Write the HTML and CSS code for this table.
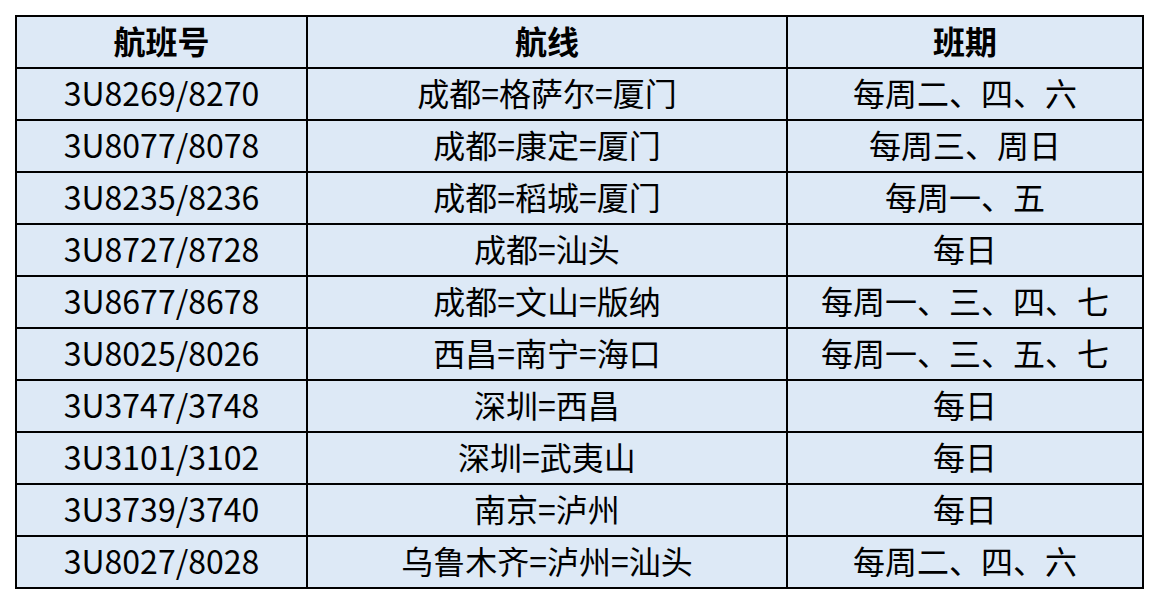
FILE: index.html
```html
<!DOCTYPE html>
<html lang="zh-CN">
<head>
<meta charset="utf-8">
<link rel="stylesheet" href="styles.css">
</head>
<body>
<div class="page">
<table class="flights">
<colgroup><col class="c1"><col class="c2"><col class="c3"></colgroup>
<thead>
<tr><th>航班号</th><th>航线</th><th>班期</th></tr>
</thead>
<tbody>
<tr><td>3U8269/8270</td><td>成都=格萨尔=厦门</td><td>每周二、四、六</td></tr>
<tr><td>3U8077/8078</td><td>成都=康定=厦门</td><td>每周三、周日</td></tr>
<tr><td>3U8235/8236</td><td>成都=稻城=厦门</td><td>每周一、五</td></tr>
<tr><td>3U8727/8728</td><td>成都=汕头</td><td>每日</td></tr>
<tr><td>3U8677/8678</td><td>成都=文山=版纳</td><td>每周一、三、四、七</td></tr>
<tr><td>3U8025/8026</td><td>西昌=南宁=海口</td><td>每周一、三、五、七</td></tr>
<tr><td>3U3747/3748</td><td>深圳=西昌</td><td>每日</td></tr>
<tr><td>3U3101/3102</td><td>深圳=武夷山</td><td>每日</td></tr>
<tr><td>3U3739/3740</td><td>南京=泸州</td><td>每日</td></tr>
<tr><td>3U8027/8028</td><td>乌鲁木齐=泸州=汕头</td><td>每周二、四、六</td></tr>
</tbody>
</table>
</div>
</body>
</html>
```
FILE: styles.css
```css
html, body {
  margin: 0;
  padding: 0;
  background: #ffffff;
}
.page {
  padding: 15px 0 0 15px;
}
.flights {
  border-collapse: collapse;
  table-layout: fixed;
  width: 1127px;
  background: #dde9f6;
  font-family: "Noto Sans CJK SC", "Noto Sans", sans-serif;
  font-size: 32px;
  color: #000;
}
.c1 { width: 291px; }
.c2 { width: 480px; }
.c3 { width: 356px; }
.flights th,
.flights td {
  border: 2px solid #000;
  height: 47px;
  padding: 0 0 3px;
  text-align: center;
  vertical-align: middle;
  line-height: 47px;
  white-space: nowrap;
}
.flights td {
  font-weight: 400;
}
.flights th {
  font-weight: 700;
}
```
